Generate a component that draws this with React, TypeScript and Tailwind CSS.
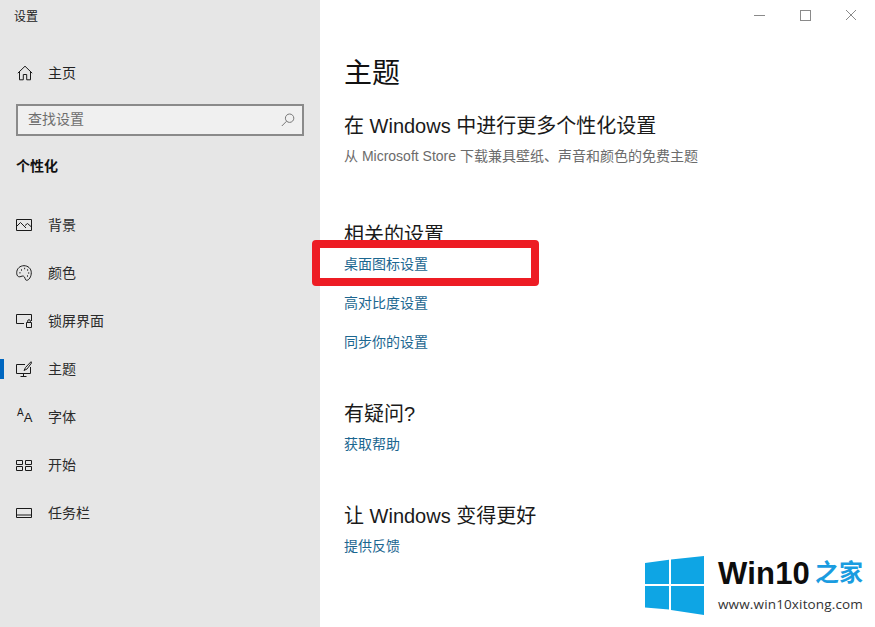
const font = { cjk: "font-['Liberation_Sans','Noto_Sans_CJK_SC',sans-serif]" };

const HomeIcon = () => (
  <svg width="16" height="16" viewBox="0 0 16 16" fill="none" stroke="#1a1a1a" strokeWidth="1">
    <path d="M0.8 8.2 8 1.2l7.2 7M2.5 6.8v8h3.8V9.5h3.4v5.3h3.8v-8" />
  </svg>
);

const SearchIcon = () => (
  <svg width="14" height="14" viewBox="0 0 14 14" fill="none" stroke="#777" strokeWidth="1">
    <circle cx="8.6" cy="5.2" r="4.2" />
    <path d="M5.6 8.2 0.8 13" />
  </svg>
);

const icons: Record<string, React.ReactNode> = {
  背景: (
    <svg width="16" height="12" viewBox="0 0 16 12" fill="none" stroke="#1a1a1a" strokeWidth="1">
      <path d="M.5.5h15v11H.5z" />
      <path d="M1 7l3.5-3.5L10 9M9 6.5l2.5-2 4 3.5" />
    </svg>
  ),
  颜色: (
    <svg width="16" height="16" viewBox="0 0 16 16" fill="none" stroke="#1a1a1a" strokeWidth="1">
      <path d="M8 .7c4 0 7.3 2.9 7.3 7 0 4-2.4 7.6-4.6 7.6-2 0-1.2-3.4-3.3-4.2-1.8-.6-3 1.4-4.9.5C.9 10.900.7 9 .7 7.700.7 3.600 4 .7 8 .7z" />
      <path d="M5 5h.9M8.200 3.500h.9M11.200 5h.9M12.300 8h.9M11 11h.9M3.500 7.800h.9" strokeWidth="1.600" />
    </svg>
  ),
  锁屏界面: (
    <svg width="16" height="14" viewBox="0 0 16 14" fill="none" stroke="#1a1a1a" strokeWidth="1">
      <path d="M8 9.500H.5V.5h15v6.500" />
      <path d="M10.500 8.500h5v5h-5zM11.700 8.500V7a1.300 1.300 0 0 1 2.600 0v1.500" />
    </svg>
  ),
  主题: (
    <svg width="16" height="16" viewBox="0 0 16 16" fill="none" stroke="#1a1a1a" strokeWidth="1">
      <path d="M9 3.500H.5v9h14V6M7.500 12.500v2.500M4.500 15.500h6" />
      <path d="M15 .7 9.500 6.500 8 9.500l3-1.500 4.500-6z" />
    </svg>
  ),
  字体: (
    <span className="flex items-end font-['Liberation_Sans',sans-serif] text-[#1a1a1a] leading-none pl-[1px]">
      <span className="text-[10px] -mt-[3px] self-start">A</span>
      <span className="text-[13px]">A</span>
    </span>
  ),
  开始: (
    <svg width="16" height="11" viewBox="0 0 16 11" fill="none" stroke="#1a1a1a" strokeWidth="1">
      <path d="M.5.500h6v4h-6zM9.500.500h6v4h-6zM.5 6.500h6v4h-6zM9.500 6.500h6v4h-6z" />
    </svg>
  ),
  任务栏: (
    <svg width="16" height="10" viewBox="0 0 16 10" fill="none" stroke="#1a1a1a" strokeWidth="1">
      <path d="M.5.500h15v9H.5zM.5 7h15" />
    </svg>
  ),
};

const navItems = ["背景", "颜色", "锁屏界面", "主题", "字体", "开始", "任务栏"];

const NavItem = ({ name }: { name: string }) => (
  <div className="relative flex items-center h-[48px] text-[14px] text-[#2b2b2b]">
    {name === "主题" && <div className="absolute left-0 top-[14px] w-[4px] h-[20px] bg-[#0067c0]" />}
    <div className="w-[48px] pl-[16px] flex items-center">{icons[name]}</div>
    <span>{name}</span>
  </div>
);

const SettingLink = ({ text }: { text: string }) => (
  <a className="block text-[14px] leading-[20px] text-[#1b6690]">{text}</a>
);

const Logo = () => (
  <div className="absolute left-[645px] top-[556px] w-[228px] h-[60px] flex">
    <svg width="59" height="59" viewBox="0 0 59 59" fill="#0ea5e4" className="shrink-0">
      <path d="M0 7 24 3.800V28H0zM26 3.500 59 0v28H26zM0 30h24v23.500L0 51.500zM26 30h33v29l-33-5z" />
    </svg>
    <div className="ml-[14px] -mt-[3px] whitespace-nowrap">
      <div className="flex items-center h-[40px]">
        <span className="font-['Liberation_Sans',sans-serif] font-bold text-[31px] tracking-[0.2px] text-[#0d0d0d] leading-none">
          Win10
        </span>
        <span className="ml-[5px] font-bold text-[24px] leading-none text-[#1a9ce0]">之家</span>
      </div>
      <div className="font-['Open_Sans',sans-serif] text-[13.500px] tracking-[0.15px] leading-[18px] mt-[2px] text-[#333]">
        www.win10xitong.com
      </div>
    </div>
  </div>
);

export default function App() {
  return (
    <div className={`relative flex w-[875px] h-[627px] overflow-hidden bg-white ${font.cjk}`}>
      {/* sidebar */}
      <aside className="w-[320px] shrink-0 bg-[#e6e6e6]">
        <div className="pl-[14px] pt-[9px] text-[12px] leading-[16px] text-[#222]">设置</div>
        <div className="flex items-center h-[48px] mt-[24px] text-[14px] text-[#222]">
          <div className="w-[48px] pl-[17px]">
            <HomeIcon />
          </div>
          <span>主页</span>
        </div>
        <div className="mx-[16px] mt-[7px] h-[32px] flex items-center justify-between border-2 border-[#8a8a8a] bg-[#f0f0f0] pl-[10px] pr-[7px] text-[14px] text-[#6e6e6e]">
          <span className="-mt-[2px]">查找设置</span>
          <SearchIcon />
        </div>
        <div className="pl-[16px] mt-[19px] text-[14px] leading-[22px] font-bold text-[#111]">个性化</div>
        <nav className="mt-[24px]">
          {navItems.map((name) => (
            <NavItem key={name} name={name} />
          ))}
        </nav>
      </aside>

      {/* main */}
      <main className="flex-1 pl-[24px] pt-[52px]">
        <h1 className="text-[28px] leading-[44px] text-[#111]">主题</h1>
        <h2 className="mt-[15px] text-[20px] leading-[30px] text-[#1a1a1a]">在 Windows 中进行更多个性化设置</h2>
        <p className="mt-[5px] text-[14px] leading-[20px] text-[#6b6b6b]">从 Microsoft Store 下载兼具壁纸、声音和颜色的免费主题</p>
        <h2 className="mt-[54px] text-[20px] leading-[30px] text-[#1a1a1a]">相关的设置</h2>
        <div className="mt-[4px] flex flex-col gap-[19px]">
          <SettingLink text="桌面图标设置" />
          <SettingLink text="高对比度设置" />
          <SettingLink text="同步你的设置" />
        </div>
        <h2 className="mt-[47px] text-[20px] leading-[30px] text-[#1a1a1a]">有疑问?</h2>
        <div className="mt-[5px]">
          <SettingLink text="获取帮助" />
        </div>
        <h2 className="mt-[47px] text-[20px] leading-[30px] text-[#1a1a1a]">让 Windows 变得更好</h2>
        <div className="mt-[5px]">
          <SettingLink text="提供反馈" />
        </div>
      </main>

      {/* window buttons */}
      <div className="absolute top-[9px] right-[1px] flex items-center">
        <div className="w-[46px] flex justify-center">
          <div className="w-[11px] h-px bg-[#8a8a8a]" />
        </div>
        <div className="w-[46px] flex justify-center">
          <div className="w-[11px] h-[11px] border border-[#8a8a8a]" />
        </div>
        <div className="w-[46px] flex justify-center">
          <svg width="12" height="12" viewBox="0 0 12 12" stroke="#8a8a8a" strokeWidth="1">
            <path d="M1 1l10 10M11 1 1 11" />
          </svg>
        </div>
      </div>

      {/* red annotation */}
      <div className="absolute left-[312px] top-[240px] w-[227px] h-[46px] border-[8px] border-[#ed1c24] rounded-[4px]" />

      <Logo />
    </div>
  );
}
